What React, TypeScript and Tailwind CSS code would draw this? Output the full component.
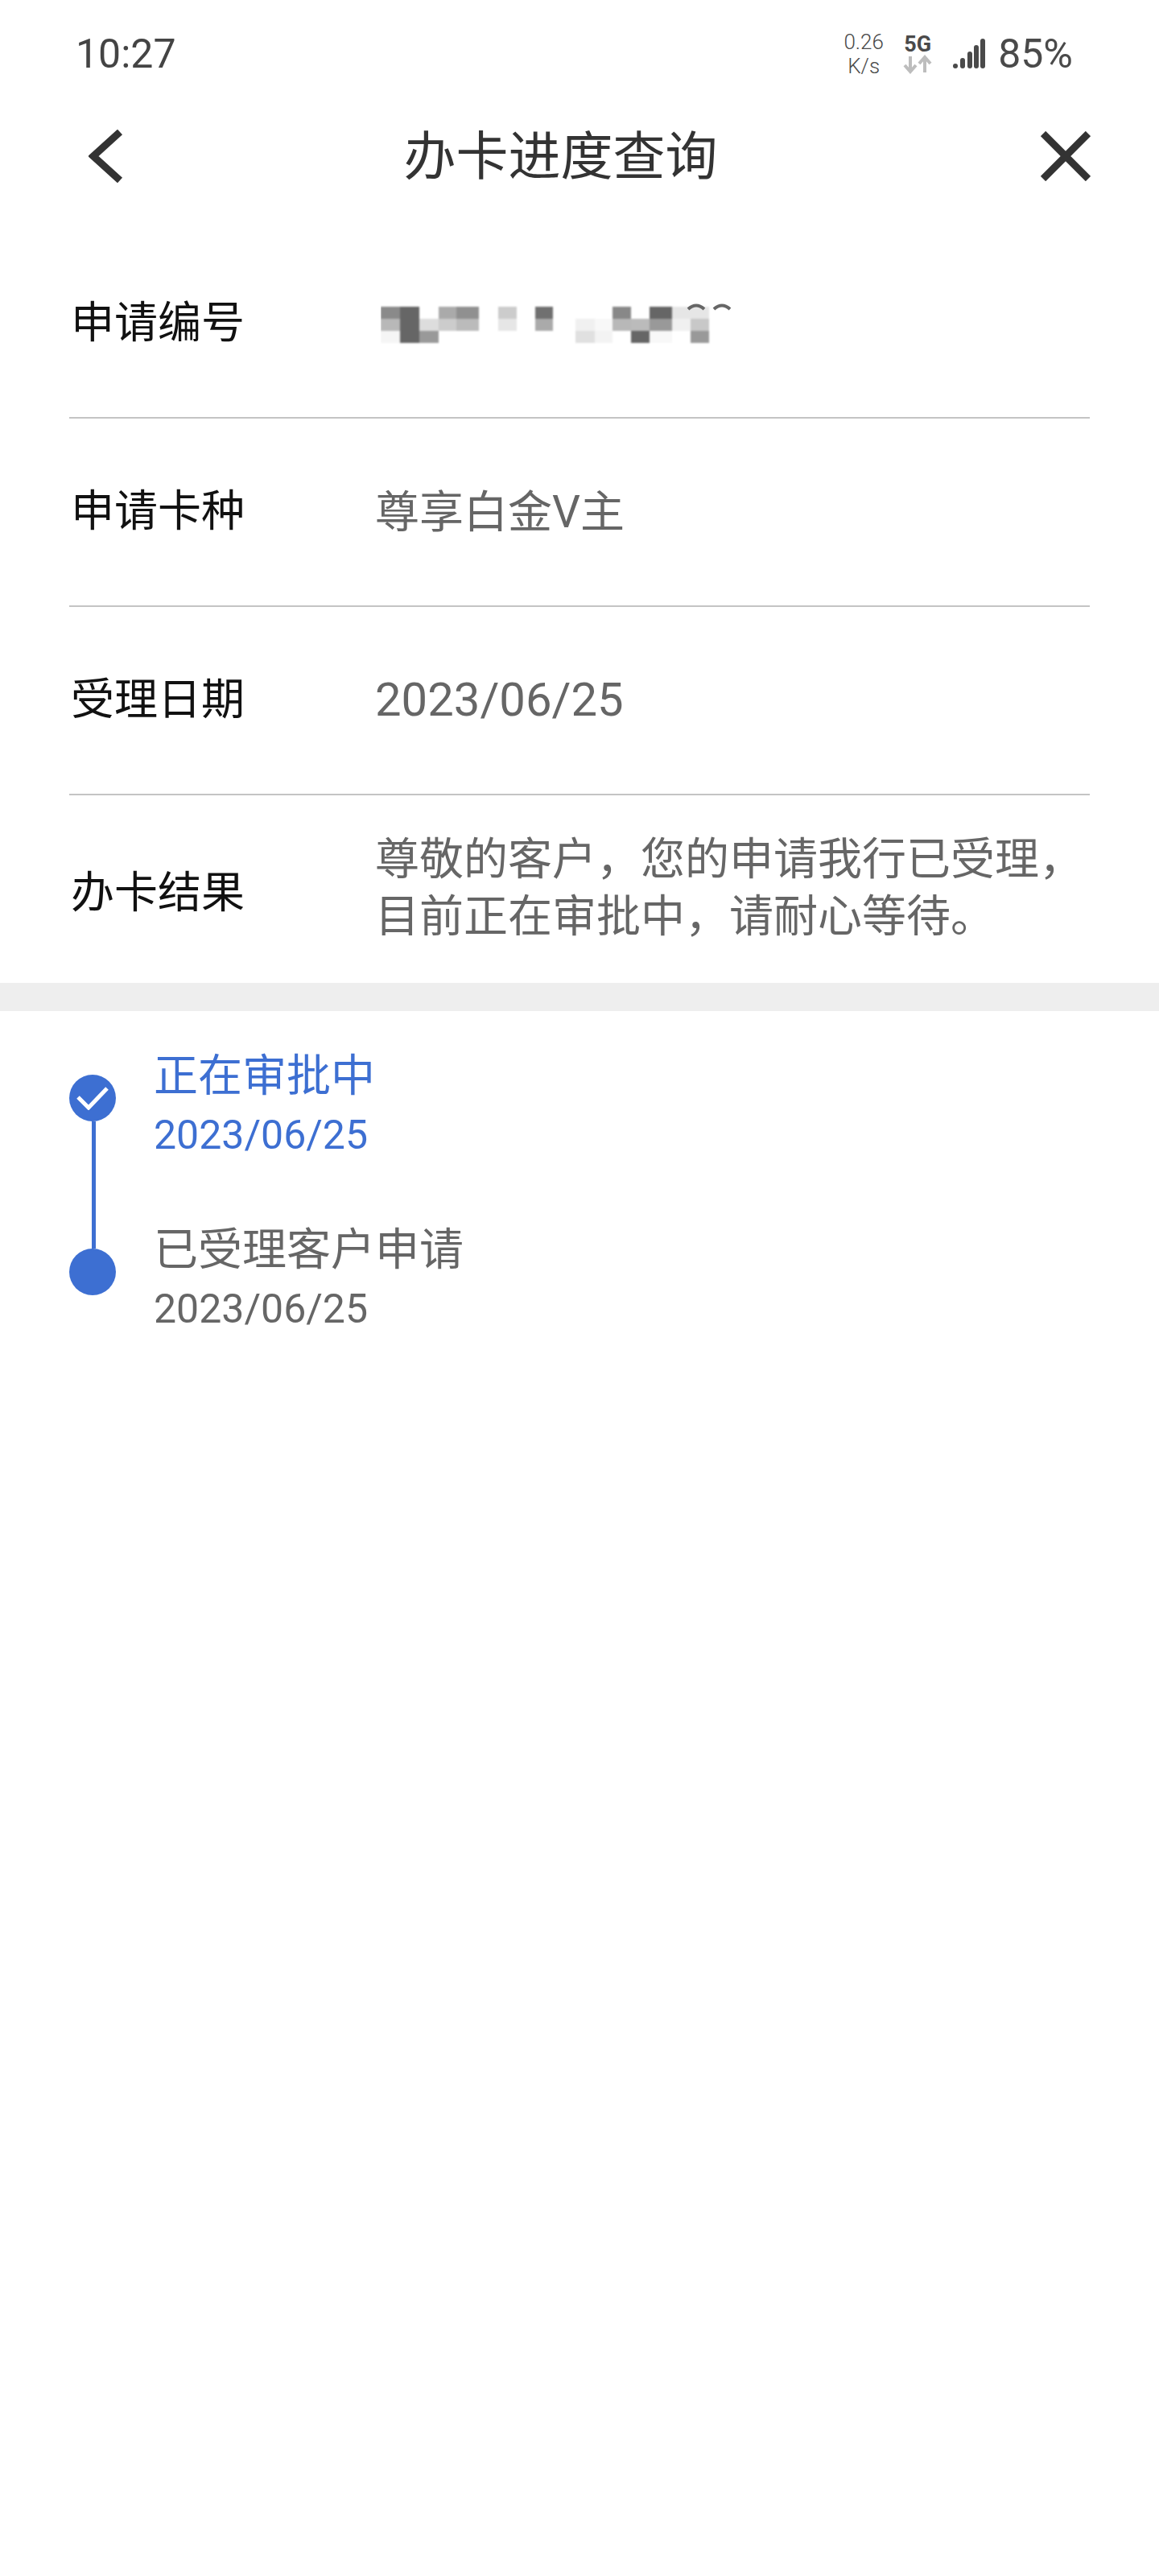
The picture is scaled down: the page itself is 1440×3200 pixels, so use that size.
const MOSAIC: [number, number, number, number, string][] = [
  [0, 0, 24, 15, "#8a8a8a"],
  [0, 15, 24, 15, "#b8b8b8"],
  [0, 30, 24, 15, "#f5f5f5"],
  [24, 0, 24, 45, "#666666"],
  [48, 15, 24, 15, "#dddddd"],
  [48, 30, 24, 15, "#999999"],
  [72, 0, 22, 15, "#aaaaaa"],
  [72, 15, 22, 15, "#cccccc"],
  [94, 0, 28, 15, "#909090"],
  [94, 15, 28, 15, "#bbbbbb"],
  [146, 0, 23, 15, "#cccccc"],
  [146, 15, 23, 15, "#e6e6e6"],
  [192, 0, 22, 15, "#707070"],
  [192, 15, 22, 15, "#aaaaaa"],
  [242, 15, 24, 15, "#f0f0f0"],
  [242, 30, 24, 15, "#e0e0e0"],
  [266, 15, 22, 15, "#f8f8f8"],
  [266, 30, 22, 15, "#f3f3f3"],
  [288, 0, 23, 15, "#888888"],
  [288, 15, 23, 15, "#b8b8b8"],
  [311, 15, 23, 15, "#bbbbbb"],
  [311, 30, 23, 15, "#666666"],
  [334, 0, 28, 15, "#666666"],
  [334, 15, 28, 15, "#999999"],
  [334, 30, 28, 15, "#f8f8f8"],
  [362, 0, 23, 15, "#e6e6e6"],
  [362, 15, 23, 15, "#f0f0f0"],
  [385, 0, 23, 15, "#e6e6e6"],
  [385, 15, 23, 15, "#c8c8c8"],
  [385, 30, 23, 15, "#999999"],
];

function Mosaic() {
  return (
    <svg className="ml-[7px]" width="440" height="54" viewBox="0 -6 440 54" fill="none">
      <g style={{ filter: "blur(1px)" }}>
        {MOSAIC.map(([x, y, w, h, fill], i) => (
          <rect key={i} x={x} y={y} width={w} height={h} fill={fill} />
        ))}
      </g>
      <path d="M382 3 Q392 -6 402 3 M414 3 Q424 -6 434 3" stroke="#666" strokeWidth="4" />
    </svg>
  );
}

function StatusBar() {
  return (
    <div className="flex h-[134px] items-center justify-between pl-[94px] pr-[107px]">
      <span className="text-[50px] leading-none text-[#444]">10:27</span>
      <div className="flex items-center text-[#4a4a4a]">
        <div className="flex w-[54px] flex-col items-center text-[26px] leading-[30px] font-light">
          <span>0.26</span>
          <span>K/s</span>
        </div>
        <div className="ml-[20px] flex w-[40px] flex-col items-center">
          <span className="text-[27px] leading-[26px] font-bold">5G</span>
          <svg width="36" height="24" viewBox="0 0 36 24" fill="none" stroke="#bdbdbd" strokeWidth="4">
            <path d="M9 2v18M2 13l7 8 7-8" />
            <path d="M27 22V3M20 11l7-8 7 8" />
          </svg>
        </div>
        <svg className="ml-[24px]" width="40" height="38" viewBox="0 0 40 38" fill="#4a4a4a">
          <circle cx="3" cy="34" r="3" />
          <rect x="9" y="24" width="6" height="13" rx="3" />
          <rect x="18" y="16" width="6" height="21" rx="3" />
          <rect x="26" y="8" width="6" height="29" rx="3" />
          <rect x="34" y="0" width="6" height="37" rx="3" />
        </svg>
        <span className="ml-[16px] text-[50px] leading-none">85%</span>
      </div>
    </div>
  );
}

function Header() {
  return (
    <div className="flex h-[120px] items-center pl-[110px] pr-[85px]">
      <svg width="44" height="66" viewBox="0 0 44 66" fill="none" stroke="#333" strokeWidth="9">
        <path d="M39 3 6 33l33 30" strokeLinejoin="miter" />
      </svg>
      <h1 className="flex-1 pt-[2px] pr-[54px] text-center text-[65px] leading-none font-normal text-[#333]">办卡进度查询</h1>
      <svg width="62" height="62" viewBox="0 0 62 62" fill="none" stroke="#333" strokeWidth="9">
        <path d="M3 3l56 56M59 3 3 59" />
      </svg>
    </div>
  );
}

function Row({ label, children, last }: { label: string; children: React.ReactNode; last?: boolean }) {
  return (
    <div className={`flex items-center ${last ? "h-[233px]" : "h-[234px] border-b-2 border-[#c4c4c4]"}`}>
      <div className={`w-[380px] shrink-0 pl-[2px] text-[54px] leading-none text-[#111] ${last ? "pt-[10px]" : ""}`}>{label}</div>
      <div className={`text-[55px] leading-[71px] text-[#666] ${last ? "pb-[4px]" : ""}`}>{children}</div>
    </div>
  );
}

function Step({ title, tone }: { title: string; tone: string }) {
  return (
    <div className={`h-[216px] ${tone}`}>
      <div className="text-[55px] leading-[68px]">{title}</div>
      <div className="mt-[6px] text-[50px] leading-[68px]">2023/06/25</div>
    </div>
  );
}

export default function App() {
  return (
    <div className="min-h-[3200px] bg-white font-['Roboto','Noto_Sans_CJK_SC',sans-serif]">
      <StatusBar />
      <Header />
      <div className="mt-[32px] px-[86px]">
        <Row label="申请编号">
          <Mosaic />
        </Row>
        <Row label="申请卡种">尊享白金V主</Row>
        <Row label="受理日期">
          <span className="text-[58px]">2023/06/25</span>
        </Row>
        <Row label="办卡结果" last>
          尊敬的客户，您的申请我行已受理，
          <br />
          目前正在审批中，请耐心等待。
        </Row>
      </div>
      <div className="h-[35px] bg-[#eeeeee]" />
      <div className="flex px-[86px]">
        <div className="flex w-[58px] flex-col items-center pt-[79px]">
          <div className="flex h-[58px] w-[58px] items-center justify-center rounded-full bg-[#3d6fd2]">
            <svg width="40" height="30" viewBox="0 0 40 30" fill="none" stroke="#fff" strokeWidth="5">
              <path d="M2 14l13 13L38 3" />
            </svg>
          </div>
          <div className="ml-[2px] h-[158px] w-[5px] bg-[#3d6fd2]" />
          <div className="h-[58px] w-[58px] rounded-full bg-[#3d6fd2]" />
        </div>
        <div className="ml-[47px] pt-[46px]">
          <Step title="正在审批中" tone="text-[#3d6fd2]" />
          <Step title="已受理客户申请" tone="text-[#666]" />
        </div>
      </div>
    </div>
  );
}
